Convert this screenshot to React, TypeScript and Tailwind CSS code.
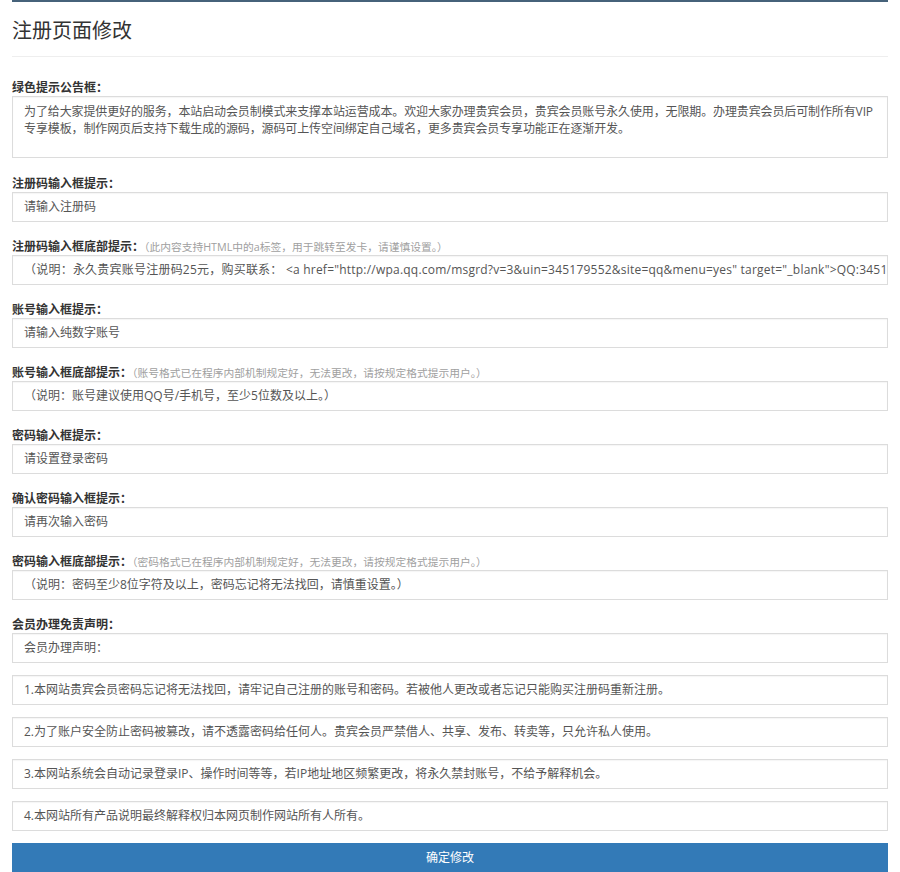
import React from "react";

const FONT = { fontFamily: '"Open Sans", "Noto Sans CJK SC", sans-serif' };

function Label({ text, hint }: { text: string; hint?: string }) {
  return (
    <div className="h-[16px] leading-[16px] mb-[2px] whitespace-nowrap">
      <span className="text-[12px] font-bold text-[#333]">{text}</span>
      {hint && <span className="text-[10.75px] text-[#a0a0a0]">{hint}</span>}
    </div>
  );
}

function Box({ text, className = "" }: { text: string; className?: string }) {
  return (
    <div
      className={
        "h-[30px] border border-[#dcdcdc] bg-white pl-[11px] pr-[11px] flex items-center overflow-hidden whitespace-nowrap text-[12px] text-[#555] shadow-[inset_0_1px_1px_rgba(0,0,0,0.04)] " +
        className
      }
    >
      {text}
    </div>
  );
}

function Group({
  label,
  hint,
  value,
  boxClass,
}: {
  label: string;
  hint?: string;
  value: string;
  boxClass?: string;
}) {
  return (
    <div className="mb-[15px]">
      <Label text={label} hint={hint} />
      <Box text={value} className={boxClass} />
    </div>
  );
}

export default function App() {
  const link =
    '（说明：永久贵宾账号注册码25元，购买联系： <a href="http://wpa.qq.com/msgrd?v=3&uin=345179552&site=qq&menu=yes" target="_blank">QQ:345179552</a>）';
  return (
    <div className="bg-white w-[900px] h-[872px] overflow-hidden" style={FONT}>
      <div className="mx-[12px]">
        <div className="h-[2px] bg-[#46627a]" />
        <div className="pt-[15px] h-[43px] text-[20px] leading-[28px] text-[#333]">注册页面修改</div>
        <div className="mt-[11px] h-px bg-[#eeeeee]" />
        <div className="mt-[21px]">
          <Label text="绿色提示公告框：" />
          <div className="h-[62px] mb-[16px] border border-[#dcdcdc] bg-white pl-[11px] pr-[11px] pt-[6px] text-[12px] leading-[17px] text-[#555] tracking-[-0.12px] shadow-[inset_0_1px_1px_rgba(0,0,0,0.04)]">
            <div className="whitespace-nowrap">
              为了给大家提供更好的服务，本站启动会员制模式来支撑本站运营成本。欢迎大家办理贵宾会员，贵宾会员账号永久使用，无限期。办理贵宾会员后可制作所有VIP
            </div>
            <div className="whitespace-nowrap">
              专享模板，制作网页后支持下载生成的源码，源码可上传空间绑定自己域名，更多贵宾会员专享功能正在逐渐开发。
            </div>
          </div>
        </div>
        <Group label="注册码输入框提示：" value="请输入注册码" />
        <Group
          label="注册码输入框底部提示："
          hint="（此内容支持HTML中的a标签，用于跳转至发卡，请谨慎设置。）"
          value={link}
          boxClass="tracking-[0.22px]"
        />
        <Group label="账号输入框提示：" value="请输入纯数字账号" />
        <Group
          label="账号输入框底部提示："
          hint="（账号格式已在程序内部机制规定好，无法更改，请按规定格式提示用户。）"
          value="（说明：账号建议使用QQ号/手机号，至少5位数及以上。）"
        />
        <Group label="密码输入框提示：" value="请设置登录密码" />
        <Group label="确认密码输入框提示：" value="请再次输入密码" />
        <Group
          label="密码输入框底部提示："
          hint="（密码格式已在程序内部机制规定好，无法更改，请按规定格式提示用户。）"
          value="（说明：密码至少8位字符及以上，密码忘记将无法找回，请慎重设置。）"
        />
        <Label text="会员办理免责声明：" />
        <div className="flex flex-col gap-[12px]">
          <Box text="会员办理声明：" />
          <Box text="1.本网站贵宾会员密码忘记将无法找回，请牢记自己注册的账号和密码。若被他人更改或者忘记只能购买注册码重新注册。" />
          <Box text="2.为了账户安全防止密码被篡改，请不透露密码给任何人。贵宾会员严禁借人、共享、发布、转卖等，只允许私人使用。" />
          <Box text="3.本网站系统会自动记录登录IP、操作时间等等，若IP地址地区频繁更改，将永久禁封账号，不给予解释机会。" />
          <Box text="4.本网站所有产品说明最终解释权归本网页制作网站所有人所有。" />
          <button className="h-[30px] w-full bg-[#337ab7] border-b border-[#2e6da4] text-white text-[12px] flex items-center justify-center">
            确定修改
          </button>
        </div>
      </div>
    </div>
  );
}
